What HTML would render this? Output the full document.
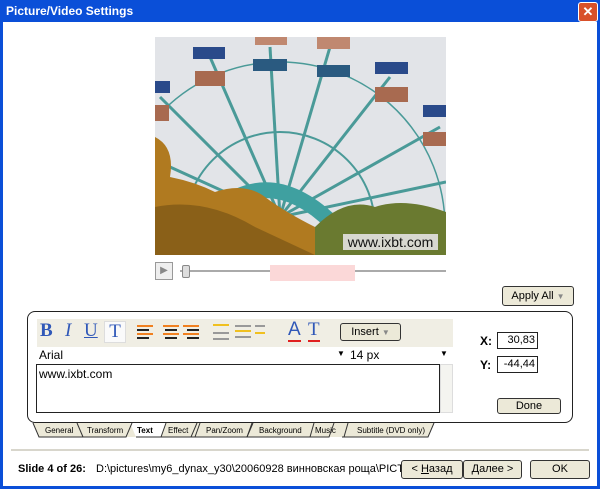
<!DOCTYPE html><html><head><style>
body{margin:0;width:600px;height:489px;overflow:hidden;font-family:Tahoma,"Liberation Sans",sans-serif;font-size:11px}
.win{position:absolute;left:0;top:0;width:600px;height:489px;background:#0a4fd8}
.title{position:absolute;left:6px;top:4px;color:#fff;font-weight:bold;font-size:12px}
.close{position:absolute;left:578px;top:2px;width:18px;height:18px;background:#d8502a;border:1px solid #fff;border-radius:3px;color:#fff;font-weight:bold;text-align:center;line-height:18px;font-size:13px}
.client{position:absolute;left:3px;top:22px;width:594px;height:464px;background:#fff}
.a{position:absolute}
.btn{position:absolute;background:#ece9d8;border:1px solid #333;border-radius:3px;text-align:center;font-size:11px;box-sizing:border-box}
.tl{position:absolute;top:426px;font-size:8px;font-family:"Liberation Sans",sans-serif}
</style></head><body><div class="win">
<div class="title">Picture/Video Settings</div><div class="close">✕</div>
<div class="client"></div>
<div class="a" style="left:155px;top:37px;width:291px;height:218px;background:#e2e4e8;overflow:hidden">
<svg width="291" height="218" style="position:absolute;left:0;top:0">
<g stroke="#4a9a98" fill="none"><circle cx="125" cy="190" r="165" stroke-width="1.5"/><circle cx="125" cy="190" r="95" stroke-width="2"/>
<g stroke-width="3"><line x1="125" y1="180" x2="5" y2="60"/><line x1="125" y1="180" x2="55" y2="20"/><line x1="125" y1="180" x2="115" y2="10"/><line x1="125" y1="180" x2="175" y2="10"/><line x1="125" y1="180" x2="235" y2="40"/><line x1="125" y1="180" x2="285" y2="90"/><line x1="125" y1="180" x2="291" y2="145"/><line x1="125" y1="180" x2="15" y2="130"/></g></g>
<g><rect x="38" y="10" width="32" height="12" fill="#2a4a8a"/><rect x="40" y="34" width="30" height="15" fill="#a86a50"/>
<rect x="100" y="0" width="32" height="8" fill="#c08870"/><rect x="98" y="22" width="34" height="12" fill="#2a5a80"/>
<rect x="162" y="0" width="33" height="12" fill="#c08870"/><rect x="162" y="28" width="33" height="12" fill="#2a5a80"/>
<rect x="220" y="25" width="33" height="12" fill="#2a4a8a"/><rect x="220" y="50" width="33" height="15" fill="#a86a50"/>
<rect x="268" y="68" width="23" height="12" fill="#2a4a8a"/><rect x="268" y="95" width="23" height="14" fill="#a86a50"/>
<rect x="0" y="44" width="15" height="12" fill="#2a4a8a"/><rect x="0" y="68" width="14" height="16" fill="#a86a50"/></g>
<path d="M80 152 Q130 130 182 180 L172 192 Q130 150 88 165Z" fill="#3fa0a0"/>
<path d="M0 100 Q20 110 15 140 Q40 145 60 155 Q90 145 110 160 Q130 175 160 190 V218 H0Z" fill="#b07a20"/>
<path d="M160 190 Q190 160 220 170 Q250 160 291 175 V218 H160Z" fill="#6a7a30"/>
<path d="M0 170 Q50 160 100 190 L160 218 H0Z" fill="#8a6018"/>
</svg>
<div class="a" style="left:188px;top:197px;width:95px;height:16px;background:#d8d8d0;color:#111;font:14px 'Liberation Sans',sans-serif;text-align:center;line-height:16px">www.ixbt.com</div></div>
<div class="a" style="left:155px;top:262px;width:16px;height:16px;border:1px solid #999;background:#eee;color:#888;font-size:10px;text-align:center;line-height:16px">▶</div>
<div class="a" style="left:180px;top:270px;width:266px;height:2px;background:#aaa"></div>
<div class="a" style="left:182px;top:265px;width:6px;height:11px;background:#ddd;border:1px solid #888;border-radius:2px"></div>
<div class="a" style="left:270px;top:265px;width:85px;height:16px;background:#fbd8d8"></div>
<div class="btn" style="left:502px;top:286px;width:72px;height:20px;line-height:18px">Apply All <span style="color:#888;font-size:8px">▼</span></div>
<div class="a" style="left:27px;top:311px;width:546px;height:112px;border:1px solid #222;border-radius:8px;box-sizing:border-box"></div>
<div class="a" style="left:37px;top:319px;width:416px;height:28px;background:#f0eee4"></div>
<div class="a" style="left:40px;top:320px;font:bold 19px 'Liberation Serif',serif;color:#3058b8;letter-spacing:0">B</div>
<div class="a" style="left:65px;top:320px;font:italic 19px 'Liberation Serif',serif;color:#3058b8">I</div>
<div class="a" style="left:84px;top:320px;font:19px 'Liberation Serif',serif;color:#3058b8;text-decoration:underline">U</div>
<div class="a" style="left:104px;top:321px;width:20px;height:20px;background:#fafafa;border:1px solid #ddd;font:19px 'Liberation Serif',serif;color:#3058b8;text-align:center;line-height:20px">T</div>
<svg class="a" style="left:135px;top:323px" width="130" height="18"><g stroke-width="2"><g stroke="#f08020"><line x1="2" y1="3" x2="18" y2="3"/><line x1="2" y1="11" x2="18" y2="11"/><line x1="28" y1="3" x2="44" y2="3"/><line x1="28" y1="11" x2="44" y2="11"/><line x1="48" y1="3" x2="64" y2="3"/><line x1="48" y1="11" x2="64" y2="11"/></g><g stroke="#222"><line x1="2" y1="7" x2="14" y2="7"/><line x1="2" y1="15" x2="14" y2="15"/><line x1="30" y1="7" x2="42" y2="7"/><line x1="30" y1="15" x2="42" y2="15"/><line x1="52" y1="7" x2="64" y2="7"/><line x1="52" y1="15" x2="64" y2="15"/></g><g stroke="#f0c020"><line x1="78" y1="2" x2="94" y2="2"/><line x1="100" y1="8" x2="116" y2="8"/><line x1="120" y1="10" x2="130" y2="10"/></g><g stroke="#999"><line x1="78" y1="10" x2="94" y2="10"/><line x1="78" y1="16" x2="94" y2="16"/><line x1="100" y1="3" x2="116" y2="3"/><line x1="100" y1="14" x2="116" y2="14"/><line x1="120" y1="3" x2="130" y2="3"/></g></g></svg>
<div class="a" style="left:288px;top:320px;font:19px 'Liberation Sans',sans-serif;color:#3058b8;border-bottom:2px solid #e02020;line-height:20px">A</div>
<div class="a" style="left:308px;top:320px;font:19px 'Liberation Serif',serif;color:#3058b8;border-bottom:2px solid #e02020;line-height:20px">T</div>
<div class="btn" style="left:340px;top:323px;width:61px;height:18px;line-height:16px">Insert <span style="color:#888;font-size:8px">▼</span></div>
<div class="a" style="left:37px;top:348px;width:310px;height:15px;background:#fff;font:12px 'Liberation Sans',sans-serif;line-height:15px;padding-left:2px">Arial</div>
<div class="a" style="left:337px;top:349px;font-size:8px">▼</div>
<div class="a" style="left:350px;top:348px;width:103px;height:15px;font:12px 'Liberation Sans',sans-serif;line-height:15px">14 px</div>
<div class="a" style="left:440px;top:349px;font-size:8px">▼</div>
<div class="a" style="left:36px;top:364px;width:404px;height:49px;border:1px solid #222;font:12px 'Liberation Sans',sans-serif;padding:2px;box-sizing:border-box">www.ixbt.com</div>
<div class="a" style="left:440px;top:364px;width:13px;height:49px;background:#f4f4f0;border:1px solid #ddd;box-sizing:border-box"></div>
<div class="a" style="left:480px;top:334px;font-weight:bold;font-size:12px">X:</div>
<div class="a" style="left:497px;top:332px;width:41px;height:17px;border:1px solid #222;text-align:right;line-height:15px;padding-right:2px;box-sizing:border-box">30,83</div>
<div class="a" style="left:480px;top:358px;font-weight:bold;font-size:12px">Y:</div>
<div class="a" style="left:497px;top:356px;width:41px;height:17px;border:1px solid #222;text-align:right;line-height:15px;padding-right:2px;box-sizing:border-box">-44,44</div>
<div class="btn" style="left:497px;top:398px;width:64px;height:16px;line-height:14px">Done</div>
<svg class="a" style="left:30px;top:422px" width="410" height="17">
<path d="M3 1 L9 15 H398 L404 1Z" fill="#ece9d8"/>
<path d="M100 1 L106 15 H131 L136 1Z" fill="#fff"/>
<g stroke="#333" fill="none" stroke-width="1"><path d="M3 1 L9 15 H96 L102 1"/><path d="M47 1 L53 15"/><path d="M106 15 H131 L136 1"/><path d="M131 15 H161 L167 1"/><path d="M196 15 H217 L223 1"/><path d="M278 15 H299 L304 1 M280 15 L284 1"/><path d="M312 15 H398 L404 1 M314 15 L318 1"/><path d="M161 15 H278"/><path d="M165 15 L170 1 M217 15 L222 1"/></g>
</svg>
<div class="tl" style="left:45px">General</div>
<div class="tl" style="left:87px">Transform</div>
<div class="tl" style="left:137px;font-weight:bold">Text</div>
<div class="tl" style="left:168px">Effect</div>
<div class="tl" style="left:206px">Pan/Zoom</div>
<div class="tl" style="left:259px">Background</div>
<div class="tl" style="left:315px">Music</div>
<div class="tl" style="left:357px">Subtitle (DVD only)</div>
<div class="a" style="left:11px;top:449px;width:578px;height:2px;background:#d8d6cc"></div>
<div class="a" style="left:18px;top:463px;font-weight:bold">Slide 4 of 26:</div>
<div class="a" style="left:96px;top:463px;font-family:'Liberation Sans',sans-serif">D:\pictures\my6_dynax_y30\20060928 винновская роща\PICT</div>
<div class="btn" style="left:401px;top:460px;width:62px;height:19px;line-height:17px">&lt; <u>Н</u>азад</div>
<div class="btn" style="left:463px;top:460px;width:59px;height:19px;line-height:17px"><u>Д</u>алее &gt;</div>
<div class="btn" style="left:530px;top:460px;width:60px;height:19px;line-height:17px">OK</div>
</div></body></html>
